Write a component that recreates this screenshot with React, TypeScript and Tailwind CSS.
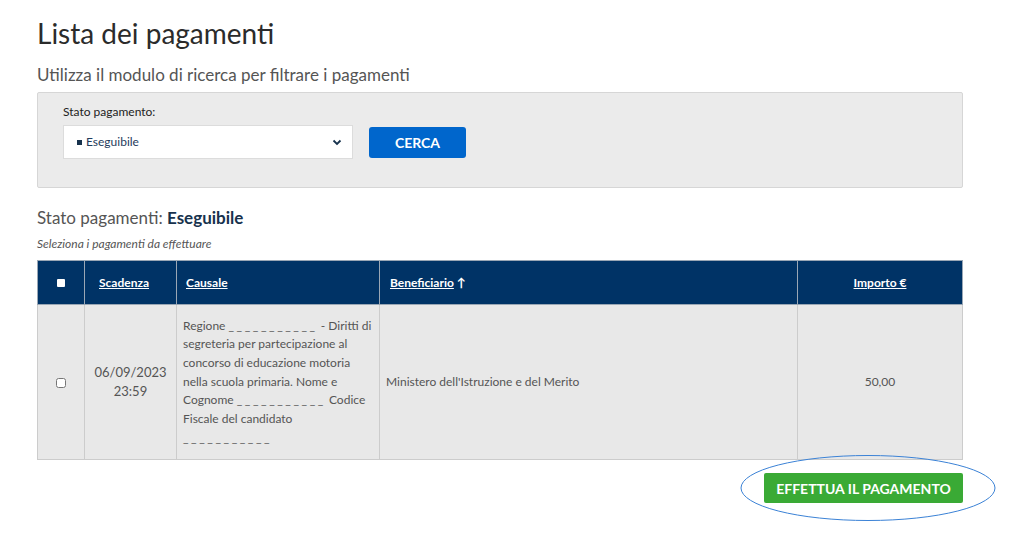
const CAUSALE_LINES = [
  ["Regione ", "___________", " - Diritti di"],
  ["segreteria per partecipazione al"],
  ["concorso di educazione motoria"],
  ["nella scuola primaria. Nome e"],
  ["Cognome ", "___________", " Codice"],
  ["Fiscale del candidato"],
  ["", "___________"],
];

export default function App() {
  return (
    <div className="relative min-h-[544px] w-[1024px] bg-white font-['Lato',sans-serif] text-[#333]">
      <div className="ml-[37px] w-[926px] pt-[14px]">
        <h1 className="text-[28px] leading-[38px] text-[#2b2b2b]">Lista dei pagamenti</h1>
        <p className="mt-[11px] text-[17px] leading-[24px] text-[#555]">
          Utilizza il modulo di ricerca per filtrare i pagamenti
        </p>

        <div className="mt-[5px] h-[96px] rounded-[2px] border border-[#d6d6d6] bg-[#ebebeb] px-[25px] pt-[10px]">
          <label className="block text-[12px] leading-[18px] text-[#222]">Stato pagamento:</label>
          <div className="mt-[4px] flex items-center gap-[16px]">
            <div className="flex h-[34px] w-[290px] items-center justify-between border border-[#dcdcdc] bg-white pl-[13px] pr-[10px]">
              <span className="flex items-center gap-[4px] text-[12px] text-[#1f3b5c]">
                <span className="inline-block h-[5px] w-[5px] bg-[#17324d]" />
                Eseguibile
              </span>
              <svg width="10" height="7" viewBox="0 0 10 7">
                <path d="M1.5 1.5 L5 5 L8.5 1.5" fill="none" stroke="#17324d" strokeWidth="1.8" />
              </svg>
            </div>
            <button className="h-[31px] w-[97px] rounded-[3px] bg-[#0066cc] text-[14px] font-bold text-white">
              CERCA
            </button>
          </div>
        </div>

        <h2 className="mt-[18px] text-[17px] leading-[24px] text-[#555]">
          Stato pagamenti: <span className="font-bold text-[#17324d]">Eseguibile</span>
        </h2>
        <p className="mt-[6px] text-[12px] italic leading-[16px] text-[#555]">Seleziona i pagamenti da effettuare</p>

        <table className="mt-[8px] w-full border-collapse text-[12px]">
          <thead>
            <tr className="h-[44px] bg-[#003366] text-white">
              <th className="w-[47px] border border-[#9aa7b5]">
                <span className="inline-block h-[8px] w-[8px] rounded-[1px] bg-white align-middle" />
              </th>
              <th className="w-[92px] border border-[#9aa7b5] pl-[14px] text-left font-bold underline">Scadenza</th>
              <th className="w-[203px] border border-[#9aa7b5] pl-[9px] text-left font-bold underline">Causale</th>
              <th className="w-[418px] border border-[#9aa7b5] pl-[10px] text-left font-bold">
                <span className="underline">Beneficiario</span> ↑
              </th>
              <th className="border border-[#9aa7b5] text-center font-bold underline">Importo €</th>
            </tr>
          </thead>
          <tbody>
            <tr className="h-[155px] bg-[#e8e8e8] text-[#555]">
              <td className="border border-[#cccccc] text-center">
                <input type="checkbox" className="h-[10px] w-[10px] align-middle" />
              </td>
              <td className="border border-[#cccccc] text-center text-[13px] leading-[19px]">
                06/09/2023
                <br />
                23:59
              </td>
              <td className="border border-[#cccccc] px-[6px] py-[8px] text-[12px] leading-[18.7px]">
                {CAUSALE_LINES.map((parts, i) => (
                  <div key={i} className="whitespace-pre">
                    {parts.map((p, j) =>
                      p.startsWith("_") ? (
                        <span key={j} className="tracking-[2.6px]">{p}</span>
                      ) : (
                        <span key={j}>{p}</span>
                      )
                    )}
                  </div>
                ))}
              </td>
              <td className="border border-[#cccccc] pl-[6px]">Ministero dell&apos;Istruzione e del Merito</td>
              <td className="border border-[#cccccc] text-center">50,00</td>
            </tr>
          </tbody>
        </table>

        <div className="mt-[13px] flex justify-end">
          <button className="h-[30px] w-[199px] rounded-[2px] bg-[#3aaa35] text-[14px] font-bold text-white">
            EFFETTUA IL PAGAMENTO
          </button>
        </div>
      </div>

      <svg className="absolute left-[739px] top-[453px]" width="258" height="70" viewBox="0 0 258 70">
        <ellipse cx="129" cy="35" rx="127" ry="32.5" fill="none" stroke="#3b82d6" strokeWidth="1" />
      </svg>
    </div>
  );
}
